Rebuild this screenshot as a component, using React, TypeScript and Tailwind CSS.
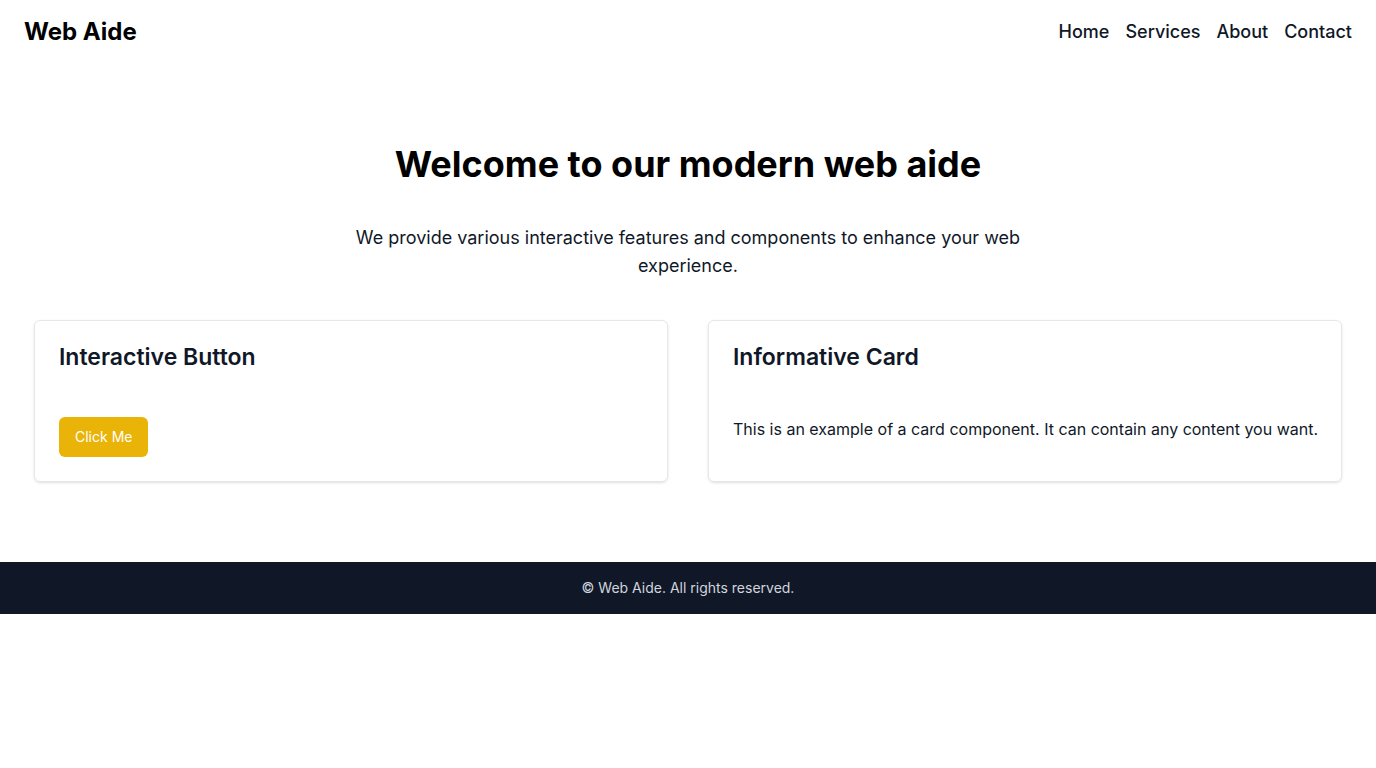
import React from 'react';

const App: React.FC = () => {
  return (
    <div className="min-h-screen bg-white text-black" style={{ fontFamily: 'Inter, "Liberation Sans", sans-serif' }}>
      <header className="flex items-center justify-between px-6 py-4">
        <h1 className="text-2xl font-bold">Web Aide</h1>
        <nav className="flex gap-4 text-lg font-medium text-gray-900">
          <a href="#">Home</a>
          <a href="#">Services</a>
          <a href="#">About</a>
          <a href="#">Contact</a>
        </nav>
      </header>

      <main className="pt-20 pb-20">
        <section className="text-center">
          <h2 className="mb-10 text-4xl font-bold">Welcome to our modern web aide</h2>
          <p className="mx-auto max-w-2xl text-lg text-gray-900">
            We provide various interactive features and components to enhance your web experience.
          </p>
        </section>

        <section className="mt-10 grid grid-cols-2 gap-10 px-[34px]">
          <div className="rounded-md border border-gray-200 p-6 shadow-sm">
            <h3 className="mb-12 text-[23px] leading-6 font-semibold text-gray-900">Interactive Button</h3>
            <button className="rounded-md bg-[#eab308] px-4 py-2.5 text-sm text-white">Click Me</button>
          </div>
          <div className="rounded-md border border-gray-200 p-6 shadow-sm">
            <h3 className="mb-12 text-[23px] leading-6 font-semibold text-gray-900">Informative Card</h3>
            <p className="whitespace-nowrap text-base text-gray-900">
              This is an example of a card component. It can contain any content you want.
            </p>
          </div>
        </section>
      </main>

      <footer className="bg-gray-900 py-4 text-center text-sm text-gray-300">
        © Web Aide. All rights reserved.
      </footer>
    </div>
  );
};

export default App;
